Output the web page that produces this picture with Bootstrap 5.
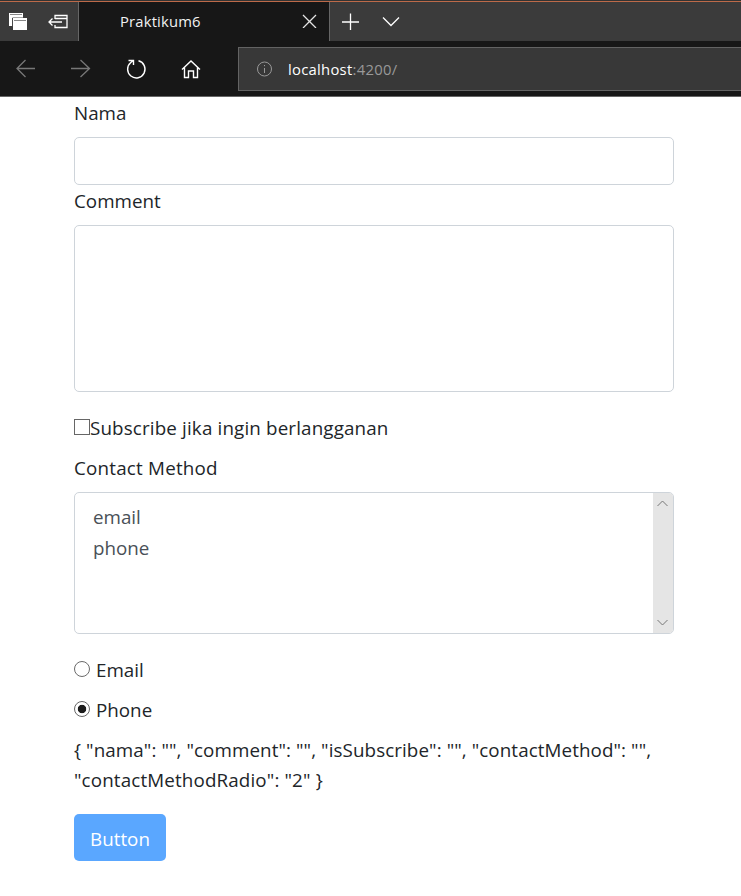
<!DOCTYPE html>
<html lang="id">
<head>
<meta charset="utf-8">
<title>Praktikum6</title>
<link href="https://cdn.jsdelivr.net/npm/bootstrap@5.3.0/dist/css/bootstrap.min.css" rel="stylesheet">
<style>
body{font-family:"Open Sans","Noto Sans",sans-serif;font-size:18.8px;line-height:30px;color:#212529;background:#fff;overflow:hidden}
svg{display:block;flex:none;fill:none}
.chrome{background:#171717;height:97px;border-bottom:1px solid #666}
.tabs{height:41px;background:#3b3b3b;border-top:1px solid #333;box-shadow:inset 0 1px #bd6a49}
.tools{width:79px;border-right:1px solid #666;padding:9px 0 0 8px;margin-top:1px}
.tab{width:251px;background:#171717;border-right:1px solid #666;margin-top:1px;padding:0 12px 2px 41px;font-size:14.8px;letter-spacing:.18px;color:#f2f2f2}
.address{height:44px;width:503px;background:#383838;border:1px solid #636363;border-right:0;margin-top:6px;padding-left:17px;font-size:14.8px;letter-spacing:.28px;color:#999}
.address b{font-weight:400;color:#fff}
.url{margin-left:15px}
.page{padding:1px 67px 0 74px}
.form-label,.line{display:block;height:30px;margin-bottom:10px;white-space:nowrap}
.form-label{margin-bottom:9px}
.field{border:1px solid #ced4da;border-radius:5px;padding:8px 16px}
.name{height:48px;margin-bottom:1px}
.note{height:167px;resize:none}
.ls-a{letter-spacing:.15px}
.ls-b{letter-spacing:.21px}
.ls-c{letter-spacing:.09px}
.ls-d{letter-spacing:.14px}
.list{height:142px;border:1px solid #ced4da;border-radius:5px;overflow:hidden;color:#495057}
.opts{padding-top:9px}
.list .opt{line-height:31px;padding-left:18px}
.bar{width:20px;background:#e5e5e5;padding:7px 4px}
.after-field{margin-top:21px}
.radio-text{margin-left:6px}
.form-check-input{width:16px;height:16px;margin:0 0 2px;border:1px solid #6a6a6a;flex:none}
.form-check-input[type=checkbox]{border-radius:0;border-color:#666}
.form-check-input[type=radio]:checked{background:radial-gradient(circle,#1c1c1c 0 3.8px,#fff 4.6px);border-color:#666}
.json{white-space:nowrap;margin:0 0 19px}
.btn-go{background:#5aa7ff;color:#fff;border:0;border-radius:5px;width:92px;height:47px;padding:3px 0 0;font-size:18.8px;line-height:30px}
</style>
</head>
<body>
<header class="chrome">
 <div class="tabs d-flex">
  <div class="tools d-flex">
   <svg width="22" height="22"><path d="M1 2h14v3h-9v10H1z" fill="#fff"/><path d="M1 2h14v13H1z" fill="#fff"/><path d="M2 3.500h12" stroke="#888"/><path d="M4.500 15.500V7h11" stroke="#4a4a4a"/><path d="M5 7h14v12H5z" fill="#fff"/><path d="M6 9.500h12" stroke="#888"/></svg>
   <svg width="22" height="22" class="ms-3" stroke="#fff" stroke-width="1.3"><path d="M9 8V4.500h12v12H9V14M9 7.500h12M3 11h13M6.500 7.500L3 11l3.500 3.500"/></svg>
  </div>
  <div class="tab d-flex align-items-center justify-content-between">
   <span>Praktikum6</span>
   <svg width="15" height="15" stroke="#e4e4e4" stroke-width="1.3"><path d="M1 2l13 13M14 2L1 15"/></svg>
  </div>
  <svg width="90" height="39" stroke="#fff" stroke-width="1.3"><path d="M12 21h17M20.500 12.500v16.500M53 16.500l8 8 8-8"/></svg>
 </div>
 <div class="d-flex">
  <svg width="238" height="55" stroke-width="1.3"><g stroke="#777"><path d="M35 27.500H17M25.500 19L17 27.500l8.500 8.500M71 27.500h18M80.500 19l9 8.500-9 8.500"/></g><g stroke="#fff" stroke-width="1.4"><path d="M138.500 19.800a8.700 8.700 0 1 1-7.700 1.700l2.700-2.300M128.500 19.500h5V24"/><path d="M182 28.500l9-8.500 9 8.500M184.500 26.500v10h4v-6.500h5v6.500h4v-10"/></g></svg>
  <div class="address d-flex align-items-center">
   <svg width="17" height="17" stroke="#999"><circle cx="8.500" cy="8" r="7"/><path d="M8.500 7v5M8.500 4v1.200"/></svg>
   <span class="url"><b>localhost</b>:4200/</span>
  </div>
 </div>
</header>
<main class="page">
 <label class="form-label" for="nama">Nama</label>
 <input id="nama" class="field name d-block w-100">
 <label class="form-label" for="comment">Comment</label>
 <textarea id="comment" class="field note d-block w-100"></textarea>
 <div class="line after-field d-flex align-items-center"><input id="subscribe" type="checkbox" class="form-check-input"><label for="subscribe" class="ls-a">Subscribe jika ingin berlangganan</label></div>
 <div class="form-label ls-b">Contact Method</div>
 <div class="list d-flex justify-content-between">
  <div class="opts"><div class="opt">email</div><div class="opt">phone</div></div>
  <div class="bar d-flex flex-column justify-content-between">
   <svg width="12" height="7" stroke="#777"><path d="M.5 6l5-5 5 5"/></svg>
   <svg width="12" height="7" stroke="#777"><path d="M.5 1l5 5 5-5"/></svg>
  </div>
 </div>
 <div class="line after-field d-flex align-items-center"><input id="by-email" type="radio" name="contact" class="form-check-input"><label for="by-email" class="radio-text">Email</label></div>
 <div class="line d-flex align-items-center"><input id="by-phone" type="radio" name="contact" class="form-check-input" checked><label for="by-phone" class="radio-text">Phone</label></div>
 <p class="json"><span class="ls-c">{ "nama": "", "comment": "", "isSubscribe": "", "contactMethod": "",</span><br><span class="ls-d">"contactMethodRadio": "2" }</span></p>
 <button class="btn btn-go">Button</button>
</main>
<script src="https://cdn.jsdelivr.net/npm/bootstrap@5.3.0/dist/js/bootstrap.bundle.min.js"></script>
</body>
</html>
